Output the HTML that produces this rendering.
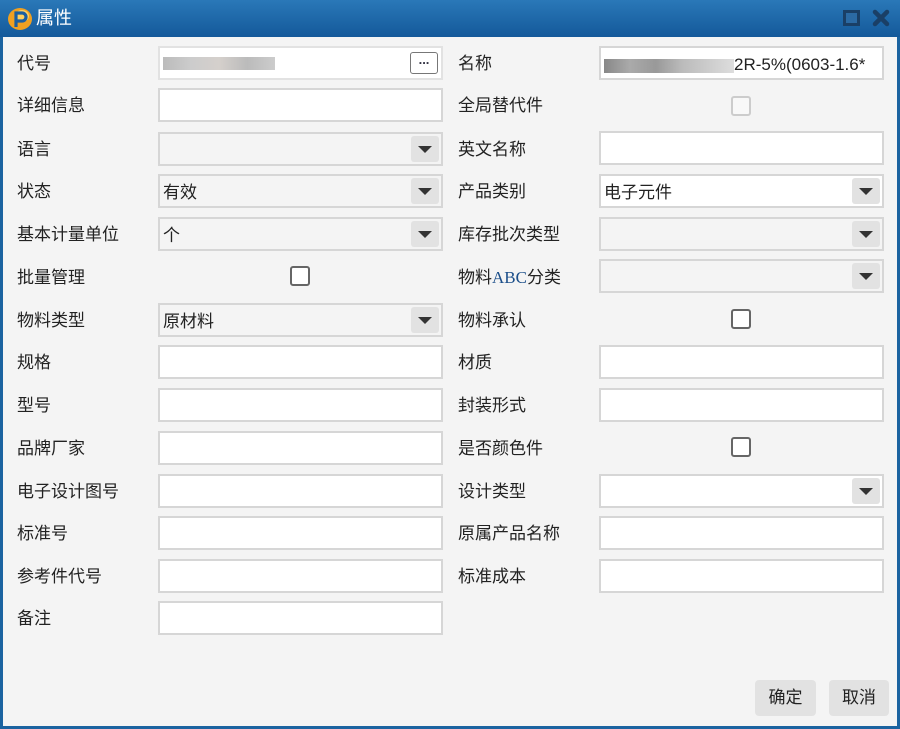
<!DOCTYPE html>
<html><head><meta charset="utf-8"><style>
*{box-sizing:border-box;margin:0;padding:0}
body{width:900px;height:729px;overflow:hidden;background:#1b63a0;font-family:"Liberation Sans","Noto Sans CJK SC",sans-serif;position:relative}
.tb{position:absolute;left:0;top:0;width:900px;height:37px;background:linear-gradient(#2a78b8,#14599a);}
.tt{position:absolute;left:36px;top:6px;color:#fff;font-size:18px;line-height:24px}
.body{position:absolute;left:3px;top:37px;width:894px;height:689px;background:#f4f4f4}
.l{position:absolute;font-size:17px;color:#222;line-height:20px}
.f{position:absolute;height:34px;border:2px solid #d6d6d6;background:#fff;font-size:17px;line-height:20px;padding:7px 0 0 3px;color:#222;white-space:nowrap}
.g{background:#f4f4f4}
.dd{position:absolute;right:2px;top:2px;width:28px;height:26px;background:#e2e2e2;border-radius:3px}
.dd:after{content:"";position:absolute;left:7px;top:10px;border-left:7px solid transparent;border-right:7px solid transparent;border-top:7px solid #333}
.cb{position:absolute;width:20px;height:20px;border:2px solid #666;border-radius:3px;background:#fff}
.cbd{border-color:#ccc;background:#f8f8f8}
.btn{position:absolute;top:680px;height:36px;background:#e2e2e2;border-radius:4px;font-size:17px;line-height:36px;text-align:center;color:#222}
</style></head><body>
<div class="tb">
<svg style="position:absolute;left:7px;top:7px" width="26" height="24" viewBox="0 0 26 24"><ellipse cx="13" cy="12" rx="12" ry="11" fill="#f0a020"/><ellipse cx="15" cy="9" rx="7" ry="6" fill="#ffd060"/><path d="M9 20V6h6a4 4 0 0 1 0 8H9" fill="none" stroke="#1b5fa0" stroke-width="3.2"/></svg>
<div class="tt">属性</div>
<div style="position:absolute;left:843px;top:10px;width:17px;height:16px;border:3px solid #1a3f66;background:#2b6aa4"></div>
<svg style="position:absolute;left:872px;top:9px" width="18" height="18" viewBox="0 0 18 18"><path d="M3 3L15 15M15 3L3 15" stroke="#1a3f66" stroke-width="4.5" stroke-linecap="round"/></svg>
</div>
<div class="body"></div>

<div class="l" style="left:17px;top:54px">代号</div>
<div class="f" style="left:158px;top:46px;width:285px;border-color:#e2e2e2"><span style="display:inline-block;margin-top:1px;width:112px;height:13px;background:linear-gradient(90deg,#bbb,#ccc,#d5d0cc,#bbb,#ccc)"></span><div style="position:absolute;right:3px;top:4px;width:28px;height:22px;border:1px solid #777;border-radius:3px;background:#fff;font-size:13px;line-height:14px;text-align:center;font-weight:bold;color:#334">...</div></div>
<div class="l" style="left:458px;top:54px">名称</div>
<div class="f" style="left:599px;top:46px;width:285px;overflow:hidden"><span style="display:inline-block;vertical-align:middle;width:130px;height:14px;background:linear-gradient(90deg,#888,#aaa,#999,#bbb,#ccc,#ddd)"></span>2R-5%(0603-1.6*</div>

<div class="l" style="left:17px;top:96px">详细信息</div>
<div class="f" style="left:158px;top:88px;width:285px"></div>
<div class="l" style="left:458px;top:96px">全局替代件</div>
<div class="cb cbd" style="left:731px;top:96px"></div>

<div class="l" style="left:17px;top:140px">语言</div>
<div class="f g" style="left:158px;top:132px;width:285px"><div class="dd"></div></div>
<div class="l" style="left:458px;top:140px">英文名称</div>
<div class="f" style="left:599px;top:131px;width:285px"></div>

<div class="l" style="left:17px;top:182px">状态</div>
<div class="f g" style="left:158px;top:174px;width:285px">有效<div class="dd"></div></div>
<div class="l" style="left:458px;top:182px">产品类别</div>
<div class="f" style="left:599px;top:174px;width:285px">电子元件<div class="dd"></div></div>

<div class="l" style="left:17px;top:225px">基本计量单位</div>
<div class="f g" style="left:158px;top:217px;width:285px">个<div class="dd"></div></div>
<div class="l" style="left:458px;top:225px">库存批次类型</div>
<div class="f g" style="left:599px;top:217px;width:285px"><div class="dd"></div></div>

<div class="l" style="left:17px;top:268px">批量管理</div>
<div class="cb" style="left:290px;top:266px"></div>
<div class="l" style="left:458px;top:268px">物料<span style="font-family:'Liberation Serif',serif;color:#1c4f8a">ABC</span>分类</div>
<div class="f g" style="left:599px;top:259px;width:285px"><div class="dd"></div></div>

<div class="l" style="left:17px;top:311px">物料类型</div>
<div class="f g" style="left:158px;top:303px;width:285px">原材料<div class="dd"></div></div>
<div class="l" style="left:458px;top:311px">物料承认</div>
<div class="cb" style="left:731px;top:309px"></div>

<div class="l" style="left:17px;top:353px">规格</div>
<div class="f" style="left:158px;top:345px;width:285px"></div>
<div class="l" style="left:458px;top:353px">材质</div>
<div class="f" style="left:599px;top:345px;width:285px"></div>

<div class="l" style="left:17px;top:396px">型号</div>
<div class="f" style="left:158px;top:388px;width:285px"></div>
<div class="l" style="left:458px;top:396px">封装形式</div>
<div class="f" style="left:599px;top:388px;width:285px"></div>

<div class="l" style="left:17px;top:439px">品牌厂家</div>
<div class="f" style="left:158px;top:431px;width:285px"></div>
<div class="l" style="left:458px;top:439px">是否颜色件</div>
<div class="cb" style="left:731px;top:437px"></div>

<div class="l" style="left:17px;top:482px">电子设计图号</div>
<div class="f" style="left:158px;top:474px;width:285px"></div>
<div class="l" style="left:458px;top:482px">设计类型</div>
<div class="f" style="left:599px;top:474px;width:285px"><div class="dd"></div></div>

<div class="l" style="left:17px;top:524px">标准号</div>
<div class="f" style="left:158px;top:516px;width:285px"></div>
<div class="l" style="left:458px;top:524px">原属产品名称</div>
<div class="f" style="left:599px;top:516px;width:285px"></div>

<div class="l" style="left:17px;top:567px">参考件代号</div>
<div class="f" style="left:158px;top:559px;width:285px"></div>
<div class="l" style="left:458px;top:567px">标准成本</div>
<div class="f" style="left:599px;top:559px;width:285px"></div>

<div class="l" style="left:17px;top:609px">备注</div>
<div class="f" style="left:158px;top:601px;width:285px"></div>

<div class="btn" style="left:755px;width:61px">确定</div>
<div class="btn" style="left:829px;width:60px">取消</div>
</body></html>
